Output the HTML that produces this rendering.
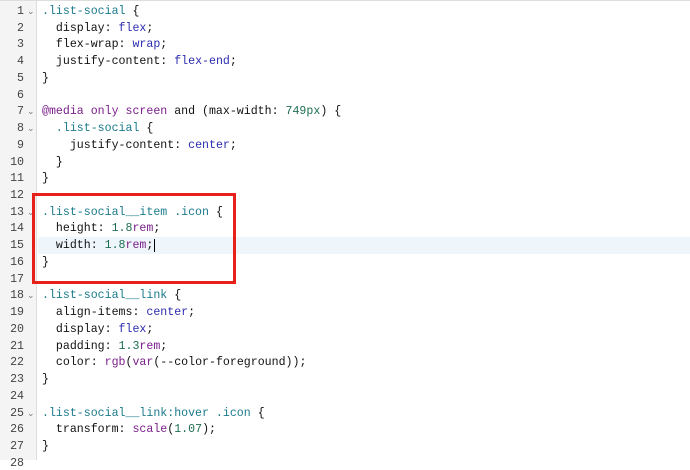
<html><head><style>
body{margin:0;width:690px;height:460px;background:#fff;overflow:hidden;position:relative;font-family:"Liberation Mono",monospace;font-size:11.6px}
.g{position:absolute;left:0;top:0;width:36px;height:460px;background:#f4f4f4;border-right:1px solid #ddd}
.ln{position:absolute;left:0;width:24px;text-align:right;color:#444}
.f{position:absolute;left:27px;color:#777;font-size:9px}
.c{position:absolute;left:42px;white-space:pre;color:#111}
.s{color:#1b7a8c}.k{color:#7a1f8a}.v{color:#2c2cae}.n{color:#1e6e50}
.hl{position:absolute;left:38px;right:0;top:237px;height:17px;background:#eef5fb}
.box{position:absolute;left:32px;top:193px;width:198px;height:85px;border:3px solid #e8201a}
.top{position:absolute;left:0;top:0;width:690px;height:1px;background:#ddd}
</style></head><body>
<div class="g"></div><div class="hl"></div><div class="top"></div>
<div id="L"></div>
<div class="box"></div>
<script>
var lines=[
'<span class="s">.list-social</span> {',
'  display: <span class="v">flex</span>;',
'  flex-wrap: <span class="v">wrap</span>;',
'  justify-content: <span class="v">flex-end</span>;',
'}','',
'<span class="k">@media only screen</span> and (max-width: <span class="n">749px</span>) {',
'  <span class="s">.list-social</span> {',
'    justify-content: <span class="v">center</span>;',
'  }','}','',
'<span class="s">.list-social__item .icon</span> {',
'  height: <span class="n">1.8</span><span class="k">rem</span>;',
'  width: <span class="n">1.8</span><span class="k">rem</span>;<span style="border-left:1px solid #000;margin-left:1px"></span>',
'}','',
'<span class="s">.list-social__link</span> {',
'  align-items: <span class="v">center</span>;',
'  display: <span class="v">flex</span>;',
'  padding: <span class="n">1.3</span><span class="k">rem</span>;',
'  color: <span class="k">rgb</span>(<span class="k">var</span>(--color-foreground));',
'}','',
'<span class="s">.list-social__link:hover .icon</span> {',
'  transform: <span class="k">scale</span>(<span class="n">1.07</span>);',
'}',''];
var fold=[1,7,8,13,18,25];
var h='';
for(var i=0;i<lines.length;i++){var y=5+i*16.73;
h+='<div class="ln" style="top:'+y+'px">'+(i+1)+'</div>';
if(fold.indexOf(i+1)>=0)h+='<div class="f" style="top:'+(y+2)+'px">&#8964;</div>';
h+='<div class="c" style="top:'+y+'px">'+lines[i]+'</div>';}
document.getElementById('L').innerHTML=h;
</script>
</body></html>
